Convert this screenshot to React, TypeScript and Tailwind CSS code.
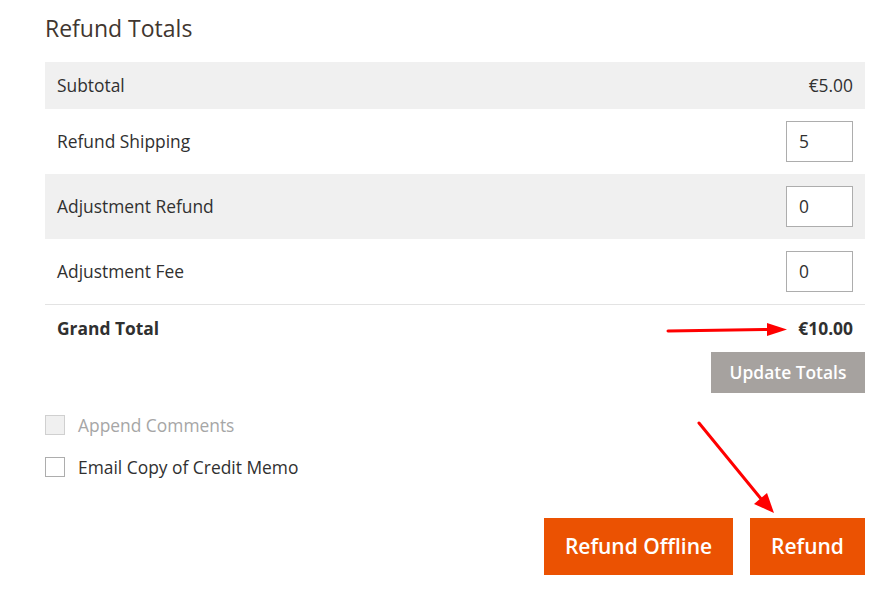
export default function App() {
  const rows = [
    { label: "Subtotal", value: "€5.00", shaded: true },
    { label: "Refund Shipping", input: "5" },
    { label: "Adjustment Refund", input: "0", shaded: true },
    { label: "Adjustment Fee", input: "0" },
  ];

  return (
    <div
      className="w-[894px] h-[605px] bg-white relative text-[#303030]"
      style={{ fontFamily: '"Open Sans", sans-serif' }}
    >
      <div className="pl-[45px] pr-[29px] pt-[12px]">
        <h2 className="text-[23px] leading-[32px] text-[#41362f] mb-[18px]">
          Refund Totals
        </h2>

        <div className="text-[17.4px]">
          {rows.map((r) => (
            <div
              key={r.label}
              className={
                "flex items-center justify-between pl-[12px] pr-[12px] " +
                (r.shaded ? "bg-[#f0f0f0] " : "") +
                (r.input ? "h-[65px]" : "h-[47px]")
              }
            >
              <span>{r.label}</span>
              {r.input ? (
                <div className="w-[67px] h-[41px] border border-[#adadad] bg-white flex items-center pl-[12px]">
                  {r.input}
                </div>
              ) : (
                <span>{r.value}</span>
              )}
            </div>
          ))}
          <div className="border-t border-[#e3e3e3] h-[48px] flex items-center justify-between pl-[12px] pr-[12px] font-bold">
            <span>Grand Total</span>
            <span>€10.00</span>
          </div>
          <div className="flex justify-end">
            <button className="bg-[#a6a29f] text-white font-semibold text-[17.4px] w-[154px] h-[41px]">
              Update Totals
            </button>
          </div>
        </div>

        <div className="mt-[19px] flex flex-col gap-[16px] text-[17.4px]">
          <label className="flex items-center gap-[13px] text-[#a6a6a6]">
            <span className="w-[20px] h-[20px] border border-[#d0d0d0] bg-[#f0f0f0]" />
            Append Comments
          </label>
          <label className="flex items-center gap-[13px]">
            <span className="w-[20px] h-[20px] border border-[#adadad] bg-white" />
            Email Copy of Credit Memo
          </label>
        </div>

        <div className="flex justify-end gap-[17px] mt-[38px] text-[21px] font-semibold text-white [text-shadow:1px_1px_0_#8a3000]">
          <button className="bg-[#eb5202] w-[189px] h-[57px]">Refund Offline</button>
          <button className="bg-[#eb5202] w-[115px] h-[57px]">Refund</button>
        </div>
      </div>

      <svg className="absolute left-0 top-0 pointer-events-none" width="894" height="605">
        <line x1="668" y1="331" x2="770" y2="329.5" stroke="#f00" strokeWidth="3" strokeLinecap="round" />
        <polygon points="767,323 787,329.5 767,336" fill="#f00" />
        <line x1="699" y1="423" x2="762" y2="500" stroke="#f00" strokeWidth="3" strokeLinecap="round" />
        <polygon points="754,504 774,513 767,493" fill="#f00" />
      </svg>
    </div>
  );
}
